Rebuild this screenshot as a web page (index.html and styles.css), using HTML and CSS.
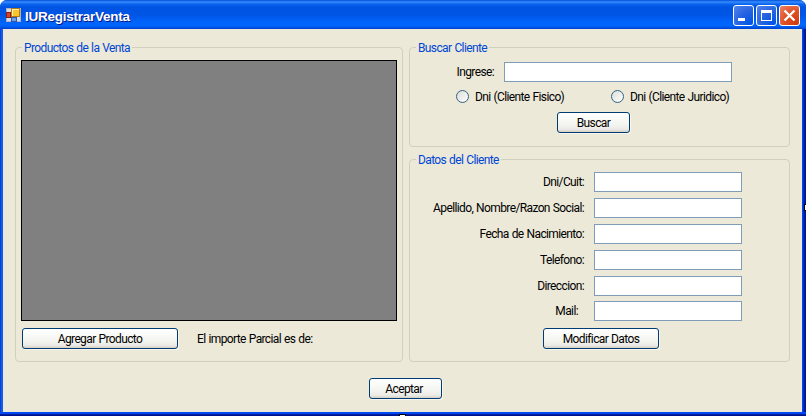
FILE: index.html
```html
<!DOCTYPE html>
<html lang="es">
<head>
<meta charset="utf-8">
<title>IURegistrarVenta</title>
<link rel="stylesheet" href="styles.css">
</head>
<body>
<div class="window">
  <header class="titlebar">
    <svg class="app-icon" width="16" height="16" viewBox="0 0 16 16" shape-rendering="crispEdges">
      <path d="M0 0h15v14H0z" fill="#a9b2c4"/>
      <path d="M1 1h13v12H1z" fill="#d9dde8"/>
      <path d="M5 0h9v9H5z" fill="#b87a10"/><path d="M6 1h7v7H6z" fill="#fff2b0"/><path d="M7 2h6v6H7z" fill="#fbc52c"/>
      <path d="M0 4h5v6H0z" fill="#8c1c14"/><path d="M1 5h3v4H1z" fill="#d8412c"/>
      <path d="M5 9h6v5H5z" fill="#2c56a8"/><path d="M6 10h4v3H6z" fill="#6ea0ea"/>
    </svg>
    <h1 class="title">IURegistrarVenta</h1>
    <div class="controls">
      <svg class="control" viewBox="0 0 19 19"><path d="M4 12h7v3H4z" fill="#fff"/></svg>
      <svg class="control" viewBox="0 0 19 19"><path d="M4 4h11v11H4zM5 7v7h9V7z" fill="#fff" fill-rule="evenodd"/></svg>
      <svg class="control close" viewBox="0 0 19 19"><path d="M4.5 4.5l10 10M14.5 4.5l-10 10" stroke="#fff" stroke-width="2.3"/></svg>
    </div>
  </header>
  <main class="client">
    <div class="panels">
      <section class="group products">
        <h2 class="legend">Productos de la Venta</h2>
        <div class="data-grid"></div>
        <div class="products-footer">
          <button class="btn add">Agregar Producto</button>
          <span class="total">El importe Parcial es de:</span>
        </div>
      </section>
      <div class="column">
        <section class="group search">
          <h2 class="legend">Buscar Cliente</h2>
          <div class="query"><label for="q">Ingrese:</label><input id="q" class="field"></div>
          <div class="kinds">
            <label class="kind"><i class="radio"></i>Dni (Cliente Fisico)</label>
            <label class="kind"><i class="radio"></i>Dni (Cliente Juridico)</label>
          </div>
          <button class="btn find">Buscar</button>
        </section>
        <section class="group details">
          <h2 class="legend">Datos del Cliente</h2>
          <div class="form">
            <label>Dni/Cuit:</label><input class="field">
            <label>Apellido, Nombre/Razon Social:</label><input class="field">
            <label>Fecha de Nacimiento:</label><input class="field">
            <label>Telefono:</label><input class="field">
            <label>Direccion:</label><input class="field">
            <label class="mail">Mail:</label><input class="field last">
          </div>
          <button class="btn modify">Modificar Datos</button>
        </section>
      </div>
    </div>
    <button class="btn accept">Aceptar</button>
  </main>
  <i class="handle handle-right"></i>
  <i class="handle handle-bottom"></i>
</div>
</body>
</html>
```
FILE: styles.css
```css
* { box-sizing: border-box; }
body { margin: 0; background: #fff; font: 12px/14px Roboto, "Liberation Sans", sans-serif; letter-spacing: -0.62px; word-spacing: 0.6px; color: #000; white-space: nowrap; overflow: hidden; }
h1, h2 { margin: 0; font: inherit; }
button, input { font: inherit; letter-spacing: inherit; word-spacing: inherit; color: inherit; padding: 0; margin: 0; }

.window {
  position: relative; width: 806px; height: 416px;
  padding: 0 4px 4px 3px; border-radius: 7px 7px 0 0;
  background: linear-gradient(90deg, #0831d9 0, #166aee 2px, #0855dd 3px, #0855dd 802px, #0048f0 802px, #0041e4 803px, #001ea0 804px, #00138c 806px);
}
.window::after {
  content: ""; position: absolute; left: 0; right: 0; bottom: 0; height: 4px;
  background: linear-gradient(#0048f1 0 2px, #001ea0 2px 3px, #00138c 3px);
}
.titlebar {
  display: flex; align-items: flex-start; height: 29px; margin: 0 -4px 0 -3px; padding: 0 6px;
  border-radius: 7px 7px 0 0;
  background: linear-gradient(#0050d8 0, #3a8cff 2px, #0a66ee 4px, #0054e2 7px, #0055e5 15px, #0062f8 21px, #0066ff 25px, #0059ee 27px, #003fcb 29px);
}
.app-icon { margin-top: 8px; }
.title { margin: 8px 0 0 3px; font: bold 13.5px/17px "Liberation Sans", sans-serif; letter-spacing: -0.25px; color: #fff; text-shadow: 1px 1px #0a1883; }
.controls { display: flex; gap: 2px; margin: 5px 0 0 auto; }
.control { width: 21px; height: 21px; border: 1px solid #fff; border-radius: 3px; background: radial-gradient(circle at 90% 90%, #0054e9 0, #2663e0 50%, #5484ee 100%); }
.control.close { background: radial-gradient(circle at 85% 90%, #d03c0e 0, #e04f24 50%, #ec8466 100%); }

.client { height: 383px; padding: 12px 12px 0; background: #ece9d8; }
.panels { display: flex; gap: 6px; }
.column { display: flex; flex-direction: column; gap: 6px; }
.group { position: relative; }
.group::before { content: ""; position: absolute; inset: 6px 0 0; border: 1px solid #d0d0bf; border-radius: 4px; }
.legend { position: absolute; left: 7px; top: 0; padding: 0 2px; background: #ece9d8; color: #0046d5; }
.products { width: 388px; height: 321px; padding: 19px 6px 0; }
.search { width: 381px; height: 106px; padding-top: 21px; }
.details { width: 381px; height: 209px; padding-top: 19px; }
.data-grid { position: relative; width: 376px; height: 261px; border: 1px solid #000; background: #808080; }
.products-footer { position: relative; display: flex; align-items: center; margin: 7px 0 0 1px; }
.total { margin-left: 19px; }

.btn {
  position: relative; display: flex; justify-content: center; align-items: center; height: 21px;
  border: 1px solid #003c74; border-radius: 3px;
  background: linear-gradient(#fff, #f4f4f0 60%, #ecebe6 85%, #d6d0c5);
  box-shadow: 1px 1px #f7f5ec;
}
.add { width: 156px; }
.find { width: 73px; margin: 9px 0 0 148px; }
.modify { width: 116px; margin: 6px 0 0 134px; }
.accept { width: 73px; margin: 16px 0 0 354px; padding-right: 3px; }

.field { display: block; width: 148px; height: 20px; border: 1px solid #7f9db9; border-radius: 0; background: #fff; }
.query { position: relative; display: flex; align-items: center; justify-content: flex-end; gap: 10px; padding-right: 58px; }
.query .field { width: 228px; }
.kinds { position: relative; display: grid; grid-template-columns: 155px auto; margin: 8px 0 0 47px; }
.kind { display: flex; align-items: center; gap: 6px; height: 13px; }
.radio { width: 13px; height: 13px; border: 1px solid #336184; border-radius: 50%; background: linear-gradient(135deg, #dcdcd7, #fff); }
.form { position: relative; display: grid; grid-template-columns: 175px 148px; grid-auto-rows: 20px; row-gap: 6px; column-gap: 10px; align-items: center; }
.form label { justify-self: end; }
.form .mail { margin: -2px 6px 0 0; }
.form .last { margin-top: -2px; }

.handle { position: absolute; z-index: 1; background: #fff; border: 1px solid #000; }
.handle-right { right: 0; top: 204px; width: 2px; height: 7px; border-right: 0; }
.handle-bottom { left: 399px; bottom: 0; width: 7px; height: 2px; border-bottom: 0; }
```
